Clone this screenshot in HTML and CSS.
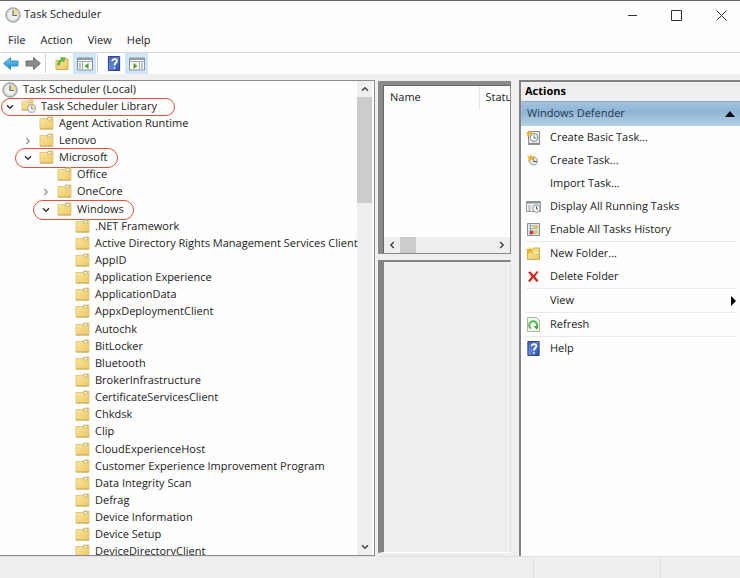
FILE: index.html
```html
<!DOCTYPE html>
<html lang="en">
<head>
<meta charset="utf-8">
<title>Task Scheduler</title>
<link rel="stylesheet" href="styles.css">
</head>
<body>
<svg class="defs" aria-hidden="true">
  <defs>
    <linearGradient id="gold" x1="0" y1="0" x2="1" y2="1"><stop offset="0" stop-color="#fbe8a4"/><stop offset="1" stop-color="#ecc763"/></linearGradient>
    <linearGradient id="blue" x1="0" y1="0" x2="1" y2="1"><stop offset="0" stop-color="#2c48a8"/><stop offset=".5" stop-color="#5f83dc"/><stop offset="1" stop-color="#2743a4"/></linearGradient>
    <linearGradient id="sky" x1="0" y1="0" x2="0" y2="1"><stop offset="0" stop-color="#7fd0f5"/><stop offset="1" stop-color="#1584c8"/></linearGradient>
    <symbol id="folder" viewBox="0 0 15 14"><path d="M1 2.500h7l1-1.500h5v12H1z" fill="url(#gold)" stroke="#e3c87c"/><path d="M8.500 1.500h4v2.500h-4z" fill="#f4f1d0" stroke="#b9ad72" stroke-width=".7"/><path d="M1 13h13" stroke="#c9a858"/></symbol>
    <symbol id="clock" viewBox="0 0 16 16"><circle cx="8" cy="8" r="7.200" fill="#c3c5c4" stroke="#98999a"/><circle cx="8" cy="8" r="5.500" fill="#edf2ef" stroke="#d9dbd9"/><path d="M8 8V2.500A5.500 5.500 0 0 1 13.500 8z" fill="#f4dc91"/><path d="M8 3.500V8.500h4" fill="none" stroke="#66727e" stroke-width="1.200"/></symbol>
    <symbol id="folder-clock" viewBox="0 0 15 14"><use href="#folder" width="13" height="12"/><use href="#clock" x="6" y="5" width="9" height="9"/></symbol>
    <symbol id="star" viewBox="0 0 8 8"><path d="M4 0l1 2.500L8 2 6 4l1.500 3L4 5.500 1 8l.5-3.500L0 2l3 .5z" fill="#efb32c"/></symbol>
    <symbol id="basic" viewBox="0 0 15 15"><path d="M2.500 1.500h11v12h-11z" fill="#eee9e8" stroke="#99898a"/><path d="M2 14.300h12" stroke="#77757a"/><circle cx="8" cy="7.500" r="4" fill="#f9fffc" stroke="#778b8b"/><path d="M8 5v3h2.500" fill="none" stroke="#438c73"/><use href="#star" width="7" height="7"/></symbol>
    <symbol id="task" viewBox="0 0 15 15"><circle cx="7.500" cy="8" r="4" fill="#e4e8e9" stroke="#a6aaac"/><path d="M7.500 5v3.500H11" fill="none" stroke="#57636b"/><use href="#star" x="1" y="1" width="8" height="8"/></symbol>
    <symbol id="running" viewBox="0 0 15 15"><path d="M.5 2.500h14v10H.5z" fill="#f3f3f3" stroke="#999"/><path d="M.5 3.500h14" stroke="#8c929a" stroke-width="2"/><path d="M2 7h3M2 9h3M2 11h3" stroke="#aaa"/><circle cx="10.500" cy="9.500" r="3.800" fill="#f5f7f7" stroke="#8b9196"/><path d="M10.500 7v3H12" fill="none" stroke="#526a67"/></symbol>
    <symbol id="history" viewBox="0 0 15 15"><path d="M1.500 1.500h12v12h-12z" fill="#e8eaf0" stroke="#888d98"/><path d="M3 4h9M3 6.500h9M3 9h9M3 11.500h9M4.500 2v11" stroke="#969cac" stroke-width=".8"/><path d="M10 2l2.500 4.500h-5z" fill="#edc52b"/><circle cx="5.500" cy="10.500" r="2" fill="#bc4541"/><path d="M8 9h4v3H8z" fill="#e1c766"/></symbol>
    <symbol id="new-folder" viewBox="0 0 15 15"><path d="M1.500 3.500h5l1-1.500h6v11.500h-12z" fill="url(#gold)" stroke="#d5ac49"/><path d="M2 6.500h11" stroke="#fbedb4"/><use href="#star" x="0" y="1" width="8" height="8"/></symbol>
    <symbol id="delete" viewBox="0 0 15 15"><path d="M2 3l2.500-.5 3 3.500L11 2l1.500 1L9 7.500l3.500 4L10.500 13l-3.300-4L4 13l-2-1 3.500-4.500z" fill="#d5271f"/></symbol>
    <symbol id="refresh" viewBox="0 0 15 15"><path d="M1.500.5h9l3 3v11h-12z" fill="#f2f7f0" stroke="#a8b8a5"/><path d="M5 11.500a4 4 0 1 1 5-.5" fill="none" stroke="#5bb55b" stroke-width="2"/><path d="M7.500 9h5L11 13z" fill="#46a446"/></symbol>
    <symbol id="help" viewBox="0 0 13 16"><path d="M.5.500h12v15H.5z" fill="url(#blue)" stroke="#263d88"/><path d="M2 1v14" stroke="#8098d8" stroke-width=".7"/><path d="M4.500 5.500c0-3 5-3 5 0 0 2-2.500 2-2.500 4.500M7 12v1.700" fill="none" stroke="#fff" stroke-width="1.800"/></symbol>
    <symbol id="arrow" viewBox="0 0 16 14"><path d="M.7 7l6.800-6v3.500H15v5H7.500V13z"/></symbol>
    <symbol id="up" viewBox="0 0 15 15"><path d="M1.500 4.500h6l1-1.500h5v10.500h-12z" fill="url(#gold)" stroke="#d1b054"/><path d="M3 9c0-3 1.500-5 4-5.700L6 1.500l5 .3-2 4.200-1.200-1.300C6 5.500 5.500 7.500 4.500 9.500z" fill="#62b92f" stroke="#4b9725" stroke-width=".4"/></symbol>
    <symbol id="pane" viewBox="0 0 16 14"><path d="M.5 1.500h15v12H.5z" fill="#f8f8f6" stroke="#8d969c"/><path d="M1 2.500h14" stroke="#929ba3" stroke-width="2"/><path d="M1 5h14M5.500 5v8" stroke="#a0a9ad"/><path d="M2 7.500h2M2 9.500h2M2 11.500h2" stroke="#7f8c93"/><path d="M11.500 6.500v6l-4-3z" fill="#4ba12e"/></symbol>
    <symbol id="pane-right" viewBox="0 0 16 14"><path d="M.5 1.500h15v12H.5z" fill="#f8f8f6" stroke="#8d969c"/><path d="M1 2.500h14" stroke="#929ba3" stroke-width="2"/><path d="M1 5h14M10.500 5v8" stroke="#a0a9ad"/><path d="M12 7.500h2M12 9.500h2M12 11.500h2" stroke="#7f8c93"/><path d="M4.500 6.500v6l4-3z" fill="#4ba12e"/></symbol>
    <symbol id="chevron" viewBox="0 0 10 10"><path d="M2.500 3.500L5 6l2.500-2.500" fill="none" stroke="currentColor" stroke-width="1.200"/></symbol>
  </defs>
</svg>

<header class="titlebar">
  <svg class="app-icon"><use href="#clock"/></svg>
  <h1>Task Scheduler</h1>
  <div class="window-buttons">
    <button type="button" aria-label="Minimize"><svg viewBox="0 0 11 11"><path d="M1 5.500h9"/></svg></button>
    <button type="button" aria-label="Maximize"><svg viewBox="0 0 11 11"><path d="M.5.500h10v10H.5z"/></svg></button>
    <button type="button" aria-label="Close"><svg viewBox="0 0 11 11"><path d="M.5.500l10 10M10.500.500l-10 10"/></svg></button>
  </div>
</header>
<nav class="menubar">
  <button type="button">File</button><button type="button">Action</button><button type="button">View</button><button type="button">Help</button>
</nav>
<div class="toolbar">
  <button type="button" class="back" aria-label="Back"><svg><use href="#arrow"/></svg></button>
  <button type="button" class="forward" aria-label="Forward"><svg><use href="#arrow"/></svg></button>
  <span class="divider"></span>
  <button type="button" aria-label="Up"><svg><use href="#up"/></svg></button>
  <button type="button" class="on" aria-label="Console tree"><svg><use href="#pane"/></svg></button>
  <span class="divider"></span>
  <button type="button" aria-label="Help"><svg><use href="#help"/></svg></button>
  <button type="button" class="on" aria-label="Action pane"><svg><use href="#pane-right"/></svg></button>
</div>

<main class="workspace">
  <section class="tree-pane">
    <ul class="tree">
      <li class="root"><svg class="app-icon"><use href="#clock"/></svg>Task Scheduler (Local)</li>
      <li class="l1"><span class="node marked wide"><svg class="exp"><use href="#chevron"/></svg><svg class="ico"><use href="#folder-clock"/></svg>Task Scheduler Library</span></li>
      <li class="l2"><span class="node"><i class="exp"></i><svg class="ico"><use href="#folder"/></svg>Agent Activation Runtime</span></li>
      <li class="l2"><span class="node"><svg class="exp closed"><use href="#chevron"/></svg><svg class="ico"><use href="#folder"/></svg>Lenovo</span></li>
      <li class="l2"><span class="node marked"><svg class="exp"><use href="#chevron"/></svg><svg class="ico"><use href="#folder"/></svg>Microsoft</span></li>
      <li class="l3"><span class="node"><i class="exp"></i><svg class="ico"><use href="#folder"/></svg>Office</span></li>
      <li class="l3"><span class="node"><svg class="exp closed"><use href="#chevron"/></svg><svg class="ico"><use href="#folder"/></svg>OneCore</span></li>
      <li class="l3"><span class="node marked"><svg class="exp"><use href="#chevron"/></svg><svg class="ico"><use href="#folder"/></svg>Windows</span></li>
      <li class="l4"><span class="node"><i class="exp"></i><svg class="ico"><use href="#folder"/></svg>.NET Framework</span></li>
      <li class="l4"><span class="node"><i class="exp"></i><svg class="ico"><use href="#folder"/></svg>Active Directory Rights Management Services Client</span></li>
      <li class="l4"><span class="node"><i class="exp"></i><svg class="ico"><use href="#folder"/></svg>AppID</span></li>
      <li class="l4"><span class="node"><i class="exp"></i><svg class="ico"><use href="#folder"/></svg>Application Experience</span></li>
      <li class="l4"><span class="node"><i class="exp"></i><svg class="ico"><use href="#folder"/></svg>ApplicationData</span></li>
      <li class="l4"><span class="node"><i class="exp"></i><svg class="ico"><use href="#folder"/></svg>AppxDeploymentClient</span></li>
      <li class="l4"><span class="node"><i class="exp"></i><svg class="ico"><use href="#folder"/></svg>Autochk</span></li>
      <li class="l4"><span class="node"><i class="exp"></i><svg class="ico"><use href="#folder"/></svg>BitLocker</span></li>
      <li class="l4"><span class="node"><i class="exp"></i><svg class="ico"><use href="#folder"/></svg>Bluetooth</span></li>
      <li class="l4"><span class="node"><i class="exp"></i><svg class="ico"><use href="#folder"/></svg>BrokerInfrastructure</span></li>
      <li class="l4"><span class="node"><i class="exp"></i><svg class="ico"><use href="#folder"/></svg>CertificateServicesClient</span></li>
      <li class="l4"><span class="node"><i class="exp"></i><svg class="ico"><use href="#folder"/></svg>Chkdsk</span></li>
      <li class="l4"><span class="node"><i class="exp"></i><svg class="ico"><use href="#folder"/></svg>Clip</span></li>
      <li class="l4"><span class="node"><i class="exp"></i><svg class="ico"><use href="#folder"/></svg>CloudExperienceHost</span></li>
      <li class="l4"><span class="node"><i class="exp"></i><svg class="ico"><use href="#folder"/></svg>Customer Experience Improvement Program</span></li>
      <li class="l4"><span class="node"><i class="exp"></i><svg class="ico"><use href="#folder"/></svg>Data Integrity Scan</span></li>
      <li class="l4"><span class="node"><i class="exp"></i><svg class="ico"><use href="#folder"/></svg>Defrag</span></li>
      <li class="l4"><span class="node"><i class="exp"></i><svg class="ico"><use href="#folder"/></svg>Device Information</span></li>
      <li class="l4"><span class="node"><i class="exp"></i><svg class="ico"><use href="#folder"/></svg>Device Setup</span></li>
      <li class="l4"><span class="node"><i class="exp"></i><svg class="ico"><use href="#folder"/></svg>DeviceDirectoryClient</span></li>
    </ul>
    <div class="vscroll">
      <button type="button" aria-label="Scroll up"><svg class="turn-up"><use href="#chevron"/></svg></button>
      <div class="track"><div class="thumb"></div></div>
      <button type="button" aria-label="Scroll down"><svg><use href="#chevron"/></svg></button>
    </div>
  </section>

  <section class="middle">
    <div class="list-pane">
      <table>
        <thead><tr><th class="name">Name</th><th>Status</th></tr></thead>
      </table>
      <div class="hscroll">
        <button type="button" aria-label="Scroll left"><svg class="turn-left"><use href="#chevron"/></svg></button>
        <div class="track"><div class="thumb"></div></div>
        <button type="button" aria-label="Scroll right"><svg class="turn-right"><use href="#chevron"/></svg></button>
      </div>
    </div>
    <div class="detail-pane"></div>
  </section>

  <aside class="actions">
    <h2>Actions</h2>
    <button type="button" class="group">Windows Defender<svg class="tri" viewBox="0 0 10 6"><path d="M5 0l5 6H0z"/></svg></button>
    <ul>
      <li><button type="button"><svg><use href="#basic"/></svg>Create Basic Task...</button></li>
      <li><button type="button"><svg><use href="#task"/></svg>Create Task...</button></li>
      <li><button type="button"><i></i>Import Task...</button></li>
      <li><button type="button"><svg><use href="#running"/></svg>Display All Running Tasks</button></li>
      <li><button type="button"><svg><use href="#history"/></svg>Enable All Tasks History</button></li>
      <li class="sep"><button type="button"><svg><use href="#new-folder"/></svg>New Folder...</button></li>
      <li><button type="button"><svg><use href="#delete"/></svg>Delete Folder</button></li>
      <li class="sep"><button type="button"><i></i>View<svg class="sub" viewBox="0 0 5 10"><path d="M0 0l5 5-5 5z"/></svg></button></li>
      <li class="sep"><button type="button"><svg><use href="#refresh"/></svg>Refresh</button></li>
      <li class="sep"><button type="button"><svg><use href="#help"/></svg>Help</button></li>
    </ul>
  </aside>
</main>
<footer class="statusbar"><span></span><span></span><span></span></footer>
</body>
</html>
```

FILE: styles.css
```css
* { box-sizing: border-box; }

body {
  margin: 0;
  height: 100vh;
  display: flex;
  flex-direction: column;
  overflow: hidden;
  border-top: 1px solid #686868;
  background: #f0eff0;
  color: #222;
  font: 11px/16px "Open Sans", "Noto Sans", sans-serif;
  text-rendering: geometricPrecision;
}

button {
  border: 0;
  padding: 0;
  background: none;
  color: inherit;
  font: inherit;
  text-rendering: inherit;
}

ul { list-style: none; margin: 0; padding: 0; }
svg { display: block; flex: none; }
.defs { position: absolute; width: 0; height: 0; }

.titlebar {
  display: flex;
  align-items: center;
  height: 28px;
  padding-left: 5px;
  gap: 3px;
  background: #fefefe;
}
.app-icon { width: 16px; height: 16px; }
.titlebar h1 { margin: 0; font-size: 11px; font-weight: 400; }
.window-buttons { display: flex; margin-left: auto; }
.window-buttons button { width: 44px; height: 28px; display: grid; place-items: center; }
.window-buttons button:last-child { width: 46px; margin-right: -4px; }
.window-buttons svg { width: 11px; height: 11px; fill: none; stroke: #333; }

.menubar {
  display: flex;
  height: 23px;
  padding-left: 8px;
  gap: 15px;
  background: #fefefe;
}

.toolbar {
  display: flex;
  align-items: center;
  height: 22px;
  border-top: 1px solid #d8d8d8;
  background: #fefefe;
}
.toolbar button { width: 22px; height: 21px; display: grid; place-items: center; }
.toolbar svg { width: 16px; height: 15px; }
.toolbar .on { width: 23px; background: #cfe5f8; }
.back { fill: url(#sky); stroke: #2f94cd; }
.forward { fill: #8b8b8b; stroke: #6f6f6f; }
.forward svg { transform: scaleX(-1); }
.divider { width: 1px; height: 19px; margin: 0 5px 0 1px; background: #d0d0d0; }

.workspace {
  flex: 1;
  min-height: 0;
  margin-top: 6px;
  display: grid;
  grid-template-columns: 375fr 136fr 229fr;
  grid-template-rows: 100%;
}

.tree-pane {
  display: flex;
  min-width: 0;
  border: solid #8c8c8c;
  border-width: 1px 1px 1px 0;
  padding-right: 2px;
  background: #fefefe;
  overflow: hidden;
}
.tree {
  flex: 1;
  min-width: 0;
  height: calc(100% + 6px);
  display: flex;
  flex-direction: column;
}
.tree li { flex: 1 1 0; min-height: 0; display: flex; align-items: center; white-space: nowrap; }
.root { padding-left: 2px; gap: 5px; }
.l1 { padding-left: 4px; }
.l2 { padding-left: 22px; }
.l3 { padding-left: 40px; }
.l4 { padding-left: 58px; }
.node { position: relative; display: flex; align-items: center; gap: 5px; }
.exp { width: 12px; height: 12px; color: #333; }
.exp.closed { transform: rotate(-90deg); color: #999; }
.ico { width: 15px; height: 14px; margin-bottom: 2px; }
.marked::after {
  content: "";
  position: absolute;
  inset: -2px -10px -2px -7px;
  border: 1px solid #e0503c;
  border-radius: 10px;
}
.wide::after { inset: -1px -18px -1px -3px; }

.vscroll { width: 15px; display: flex; flex-direction: column; background: #f0eff0; }
.vscroll button, .hscroll button { width: 16px; height: 16px; display: grid; place-items: center; color: #444; }
.vscroll svg, .hscroll svg { width: 12px; height: 12px; }
.track { flex: 1; }
.thumb { background: #cdcccd; }
.vscroll .thumb { height: 24%; }
.turn-up { transform: rotate(180deg); }
.turn-left { transform: rotate(90deg); }
.turn-right { transform: rotate(-90deg); }

.middle {
  min-width: 0;
  margin: 1px 0 3px 3px;
  display: flex;
  flex-direction: column;
  gap: 6px;
}
.list-pane {
  flex: 171;
  display: flex;
  flex-direction: column;
  min-height: 0;
  overflow: hidden;
  border: solid #8a8a8a;
  border-width: 4px 1px 1px 5px;
  box-shadow: inset 1px 1px #666;
  padding: 1px 0 0 1px;
  background: #fefefe;
}
.list-pane table { width: 160px; table-layout: fixed; border-collapse: collapse; }
.list-pane th { height: 24px; padding: 0 6px; text-align: left; font-weight: 400; }
.list-pane .name { width: 95px; border-right: 1px solid #e4e4e4; }
.hscroll { display: flex; height: 16px; margin-top: auto; background: #f0eff0; }
.hscroll .thumb { width: 17%; height: 16px; }
.detail-pane {
  flex: 296;
  border: solid #848484;
  border-width: 2px 1px 1px 6px;
  border-right-color: #e0e0e0;
  border-bottom-color: #fff;
}

.actions {
  min-width: 0;
  margin-left: 8px;
  border: solid #828282;
  border-width: 2px 0 0 2px;
  background: #fefefe;
}
.actions h2 {
  margin: 0;
  padding-left: 4px;
  height: 20px;
  border-bottom: 1px solid #9aa9b8;
  background: #f0eff0;
  color: #000;
  font-size: 11px;
  line-height: 20px;
}
.group {
  display: flex;
  align-items: center;
  justify-content: space-between;
  width: 100%;
  height: 24px;
  padding: 0 5px 0 6px;
  background: linear-gradient(#a3c2de, #8fb4d4 40%, #b5d0e6);
  color: #1e3950;
}
.tri { width: 10px; height: 6px; fill: #111; }
.actions li { margin: 0 4px 0 5px; }
.actions .sep { border-top: 1px solid #e8e8e8; }
.actions li button { display: flex; align-items: center; gap: 9px; width: 100%; height: 23px; }
.actions li svg, .actions li i { width: 15px; height: 15px; }
.actions li .sub { width: 5px; height: 10px; margin-left: auto; }

.statusbar { flex: none; height: 22px; display: grid; grid-template-columns: 534fr 127fr 79fr; border-top: 1px solid #e2e2e2; }
.statusbar span { border-right: 1px solid #e2e2e2; }
.statusbar span:last-child { border: 0; }
```
